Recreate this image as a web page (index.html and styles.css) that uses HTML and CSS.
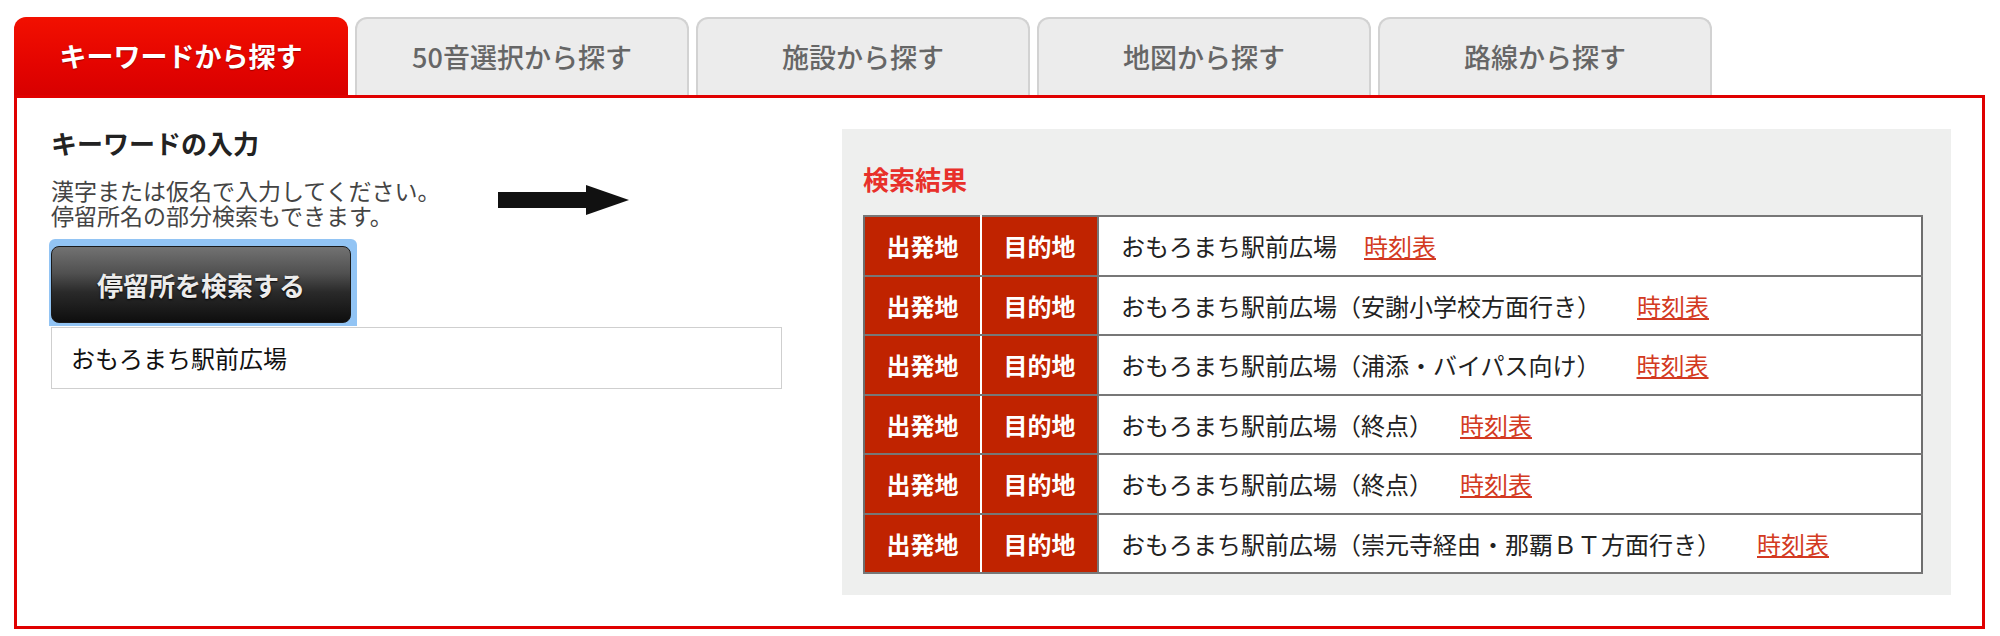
FILE: index.html
```html
<!DOCTYPE html>
<html lang="ja">
<head>
    <meta charset="UTF-8">
    <meta name="viewport" content="width=device-width, initial-scale=1.0">
    <title>バス停検索</title>
    <link rel="stylesheet" href="styles.css">
</head>
<body>
    <div class="search">
        <ul class="tabs">
            <li class="tab active">キーワードから探す</li>
            <li class="tab">50音選択から探す</li>
            <li class="tab">施設から探す</li>
            <li class="tab">地図から探す</li>
            <li class="tab">路線から探す</li>
        </ul>

        <div class="panel">
            <div class="keyword">
                <h2>キーワードの入力</h2>
                <div class="note-row">
                    <p class="note">漢字または仮名で入力してください。<br>停留所名の部分検索もできます。</p>
                    <svg class="arrow" width="131" height="30" viewBox="0 0 131 30">
                        <rect x="0" y="7" width="92" height="16" fill="#111"/>
                        <polygon points="88,0 131,15 88,30" fill="#111"/>
                    </svg>
                </div>
                <div class="btn-wrap">
                    <button class="btn-search">停留所を検索する</button>
                </div>
                <div class="keyword-input">おもろまち駅前広場</div>
            </div>

            <div class="results">
                <h3>検索結果</h3>
                <table>
                    <tr>
                        <td class="head">出発地</td>
                        <td class="head sep">目的地</td>
                        <td class="name">おもろまち駅前広場<a href="#" class="time">時刻表</a></td>
                    </tr>
                    <tr>
                        <td class="head">出発地</td>
                        <td class="head sep">目的地</td>
                        <td class="name">おもろまち駅前広場（安謝小学校方面行き）<a href="#" class="time wide">時刻表</a></td>
                    </tr>
                    <tr>
                        <td class="head">出発地</td>
                        <td class="head sep">目的地</td>
                        <td class="name">おもろまち駅前広場（浦添・バイパス向け）<a href="#" class="time wide">時刻表</a></td>
                    </tr>
                    <tr>
                        <td class="head">出発地</td>
                        <td class="head sep">目的地</td>
                        <td class="name">おもろまち駅前広場（終点）<a href="#" class="time">時刻表</a></td>
                    </tr>
                    <tr>
                        <td class="head">出発地</td>
                        <td class="head sep">目的地</td>
                        <td class="name">おもろまち駅前広場（終点）<a href="#" class="time">時刻表</a></td>
                    </tr>
                    <tr>
                        <td class="head">出発地</td>
                        <td class="head sep">目的地</td>
                        <td class="name">おもろまち駅前広場（崇元寺経由・那覇ＢＴ方面行き）<a href="#" class="time wide">時刻表</a></td>
                    </tr>
                </table>
            </div>
        </div>
    </div>
</body>
</html>
```

FILE: styles.css
```css
body {
    font-family: "Noto Sans CJK JP", "Noto Sans", sans-serif;
    margin: 0;
    padding: 0;
    background-color: #fff;
    color: #222;
}

.search {
    padding: 17px 0 0 14px;
    width: 1971px;
}

/* タブ */
.tabs {
    display: flex;
    gap: 7px;
    margin: 0;
    padding: 0;
    list-style: none;
}

.tab {
    box-sizing: border-box;
    width: 334px;
    height: 78px;
    border: 2px solid #d2d2d2;
    border-bottom: none;
    border-radius: 12px 12px 0 0;
    background-color: #ececec;
    color: #666;
    font-size: 27px;
    font-weight: 500;
    line-height: 76px;
    text-align: center;
}

.tab.active {
    border: none;
    background: linear-gradient(#f21000, #e40400 60%, #d80000);
    color: #fff;
    font-weight: bold;
    line-height: 78px;
    text-shadow: 0 1px 1px #900;
}

/* 本体 */
.panel {
    display: flex;
    gap: 60px;
    border: 3px solid #e00000;
    padding: 31px 31px 31px 34px;
}

.keyword {
    width: 731px;
    flex-shrink: 0;
}

.keyword h2 {
    margin: -4px 0 0;
    font-size: 26px;
    line-height: 36px;
    font-weight: bold;
    color: #222;
}

.note-row {
    display: flex;
    align-items: flex-start;
    margin-top: 17px;
}

.note {
    margin: 0;
    font-size: 23px;
    line-height: 25px;
    color: #444;
}

.arrow {
    margin: 7px 0 0 57px;
}

.btn-wrap {
    display: inline-block;
    margin: 11px 0 0 -2px;
    padding: 7px 6px 3px 2px;
    background-color: #92c4f4;
    border-radius: 6px 6px 0 0;
}

.btn-search {
    display: block;
    width: 300px;
    height: 77px;
    border: 1px solid #1a1a1a;
    border-radius: 8px;
    background: linear-gradient(#727272, #505050 35%, #2a2a2a 60%, #0e0e0e);
    color: #ececec;
    font-family: inherit;
    font-size: 26px;
    font-weight: bold;
    text-shadow: 0 1px 2px #000;
    cursor: pointer;
}

.keyword-input {
    box-sizing: border-box;
    height: 62px;
    margin-top: 1px;
    padding-left: 19px;
    border: 1px solid #cfcfcf;
    font-size: 24px;
    line-height: 60px;
    color: #111;
}

/* 検索結果 */
.results {
    width: 1109px;
    box-sizing: border-box;
    padding: 35px 28px 21px 21px;
    background-color: #eeefee;
}

.results h3 {
    margin: 0 0 21px;
    font-size: 26px;
    line-height: 30px;
    font-weight: bold;
    color: #e8302a;
}

table {
    width: 1060px;
    border-collapse: collapse;
    border: 2px solid #6e6e6e;
    background-color: #fff;
}

td {
    height: 57.5px;
    padding: 0;
    border-top: 2px solid #777;
    border-bottom: 2px solid #777;
    font-size: 24px;
}

td.head {
    width: 115px;
    background-color: #c02300;
    color: #fff;
    font-weight: bold;
    text-align: center;
    border-right: 2px solid #fff;
}

td.head.sep {
    border-right: 2px solid #777;
}

td.name {
    padding-left: 22px;
    color: #222;
}

.time {
    margin-left: 27px;
    color: #d33a22;
    text-decoration: underline;
}

.time.wide {
    margin-left: 36px;
}
```
